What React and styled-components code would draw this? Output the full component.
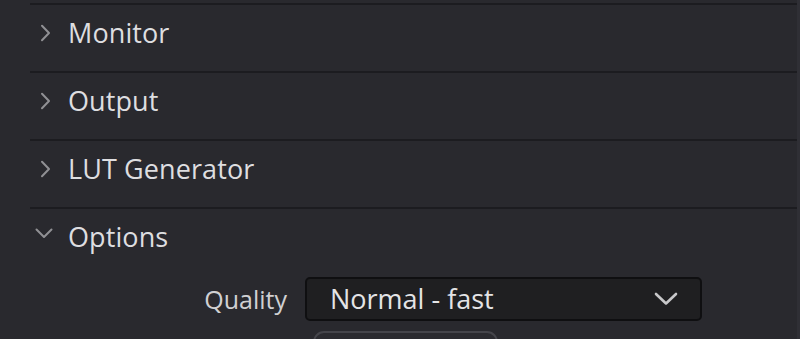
import React from "react";
import styled, { createGlobalStyle } from "styled-components";

const GlobalStyle = createGlobalStyle`
  html, body {
    margin: 0;
    padding: 0;
    background: #29292e;
  }
  body {
    font-family: "Open Sans", "Noto Sans", sans-serif;
    -webkit-font-smoothing: antialiased;
  }
`;

const Panel = styled.div`
  width: 800px;
  height: 339px;
  box-sizing: border-box;
  padding-top: 3px;
  background: #29292e;
  border-right: 3px solid #2f2f35;
  overflow: hidden;
`;

const Section = styled.div`
  margin-left: 30px;
  border-top: 2px solid #1c1c20;
`;

const Header = styled.div`
  height: 66px;
  box-sizing: border-box;
  padding: 10px 0 0 4px;
  display: flex;
  align-items: flex-start;
  cursor: pointer;
`;

const HeaderLine = styled.div`
  height: 36px;
  display: flex;
  align-items: center;
  gap: 14px;
`;

const Chevron = styled.svg`
  width: ${(p) => p.$w || 20}px;
  height: ${(p) => p.$h || 20}px;
  flex: none;
  fill: none;
  stroke: ${(p) => (p.$light ? "#c8c8ca" : "#909094")};
  stroke-width: ${(p) => p.$stroke || 2};
  stroke-linecap: round;
  stroke-linejoin: round;
`;

const Title = styled.span`
  font-size: 27px;
  line-height: 36px;
  color: #dedee0;
  letter-spacing: 0.1px;
`;

const Form = styled.div`
  display: grid;
  grid-template-columns: 257px 397px;
  column-gap: 18px;
  row-gap: 10px;
  padding-top: 2px;
`;

const Label = styled.label`
  justify-self: end;
  align-self: center;
  font-size: 25px;
  line-height: 34px;
  color: #d0d0d2;
`;

const Select = styled.div`
  height: 44px;
  box-sizing: border-box;
  border: 2px solid #0f0f11;
  border-radius: 5px;
  background: #1f1f21;
  padding: 0 22px 0 23px;
  display: flex;
  align-items: center;
  justify-content: space-between;
`;

const Value = styled.span`
  font-size: 27px;
  line-height: 36px;
  color: #e4e4e6;
`;

const Button = styled.div`
  grid-column: 2;
  margin-left: 8px;
  width: 185px;
  height: 40px;
  box-sizing: border-box;
  border: 2px solid #45454b;
  border-radius: 11px;
  background: #2b2b30;
`;

function RightChevron() {
  return (
    <Chevron viewBox="0 0 20 20">
      <polyline points="8,2.8 15,10 8,17.2" />
    </Chevron>
  );
}

function DownChevron() {
  return (
    <Chevron viewBox="0 0 20 20">
      <polyline points="2.5,2.5 10,10 17.5,2.5" />
    </Chevron>
  );
}

const collapsed = ["Monitor", "Output", "LUT Generator"];

export default function App() {
  return (
    <>
      <GlobalStyle />
      <Panel>
        {collapsed.map((name) => (
          <Section key={name}>
            <Header>
              <HeaderLine>
                <RightChevron />
                <Title>{name}</Title>
              </HeaderLine>
            </Header>
          </Section>
        ))}
        <Section>
          <Header>
            <HeaderLine>
              <DownChevron />
              <Title>Options</Title>
            </HeaderLine>
          </Header>
          <Form>
            <Label>Quality</Label>
            <Select>
              <Value>Normal - fast</Value>
              <Chevron viewBox="0 0 24 14" $w={24} $h={14} $light $stroke={2.6}>
                <polyline points="2,2 12,11.5 22,2" />
              </Chevron>
            </Select>
            <Button />
          </Form>
        </Section>
      </Panel>
    </>
  );
}
